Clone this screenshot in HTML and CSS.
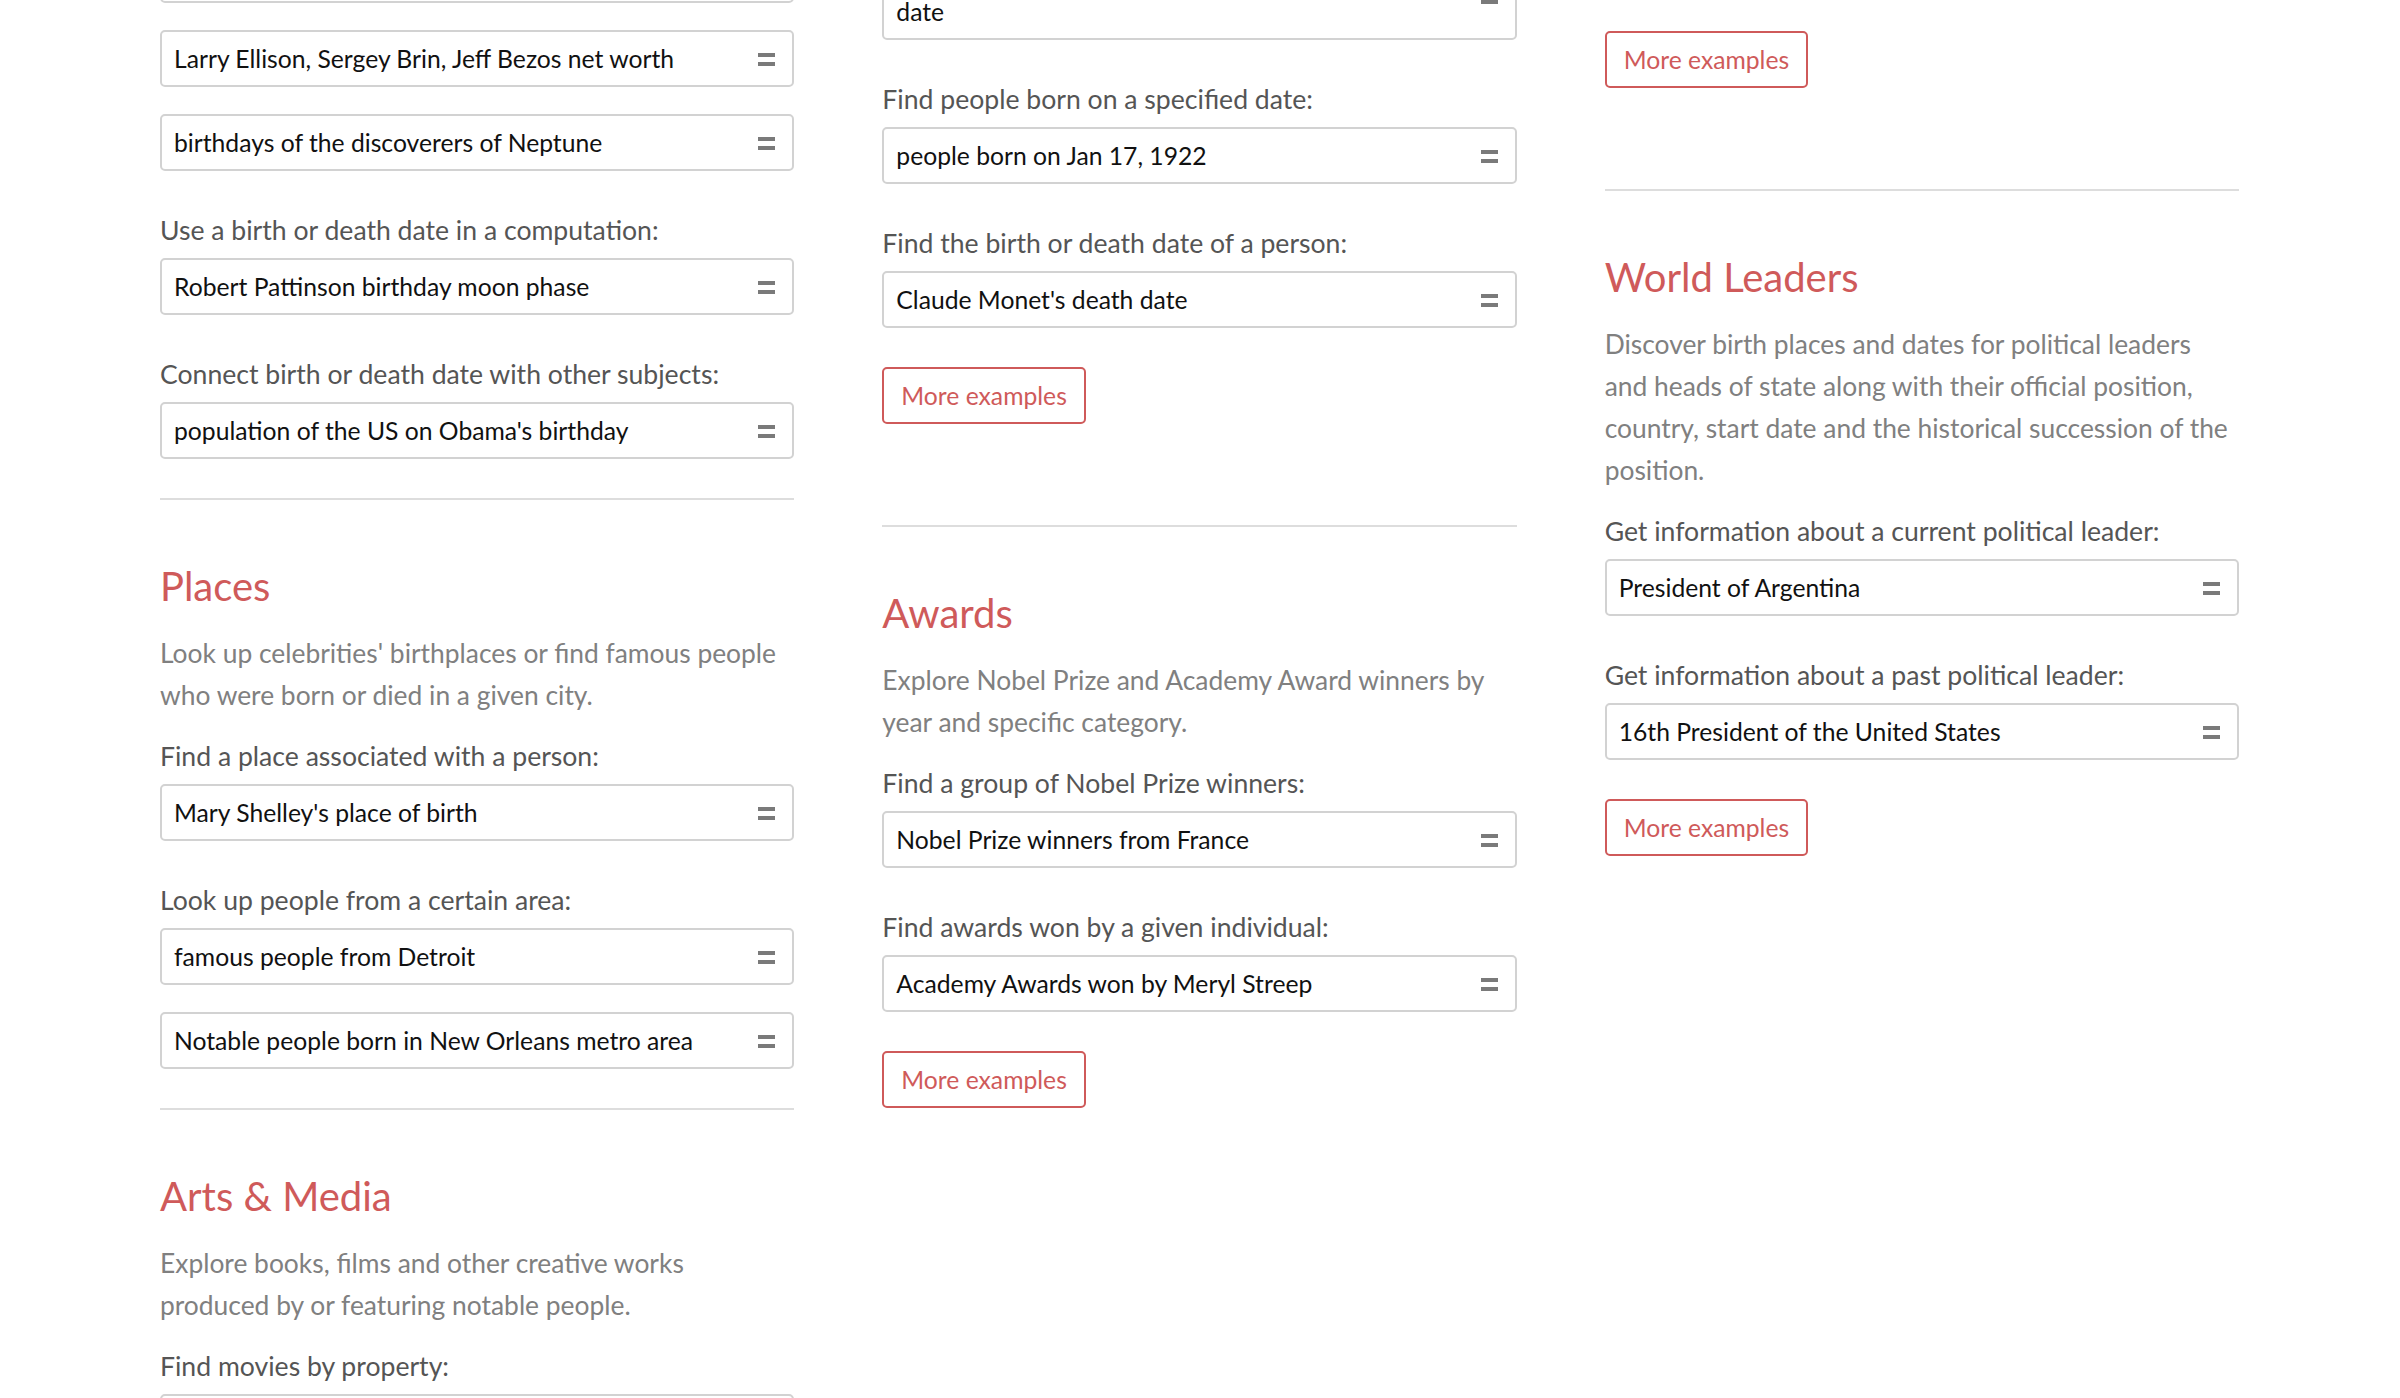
FILE: index.html
```html
<!DOCTYPE html>
<html lang="en">
<head>
<meta charset="utf-8">
<title>People examples</title>
<link rel="stylesheet" href="styles.css">
</head>
<body>
<svg width="0" height="0" class="defs" aria-hidden="true">
  <symbol id="eq" viewBox="0 0 17 13"><rect x="0" y="0" width="17" height="4"/><rect x="0" y="9" width="17" height="4"/></symbol>
</svg>
<main class="columns">
  <div class="col">
    <section class="section lead-1">
      <div class="group">
        <div class="box"><span class="q">Bill Gates birthday</span><svg class="eq"><use href="#eq"/></svg></div>
        <div class="box"><span class="q">Larry Ellison, Sergey Brin, Jeff Bezos net worth</span><svg class="eq"><use href="#eq"/></svg></div>
        <div class="box"><span class="q">birthdays of the discoverers of Neptune</span><svg class="eq"><use href="#eq"/></svg></div>
      </div>
      <div class="group">
        <div class="label">Use a birth or death date in a computation:</div>
        <div class="box"><span class="q">Robert Pattinson birthday moon phase</span><svg class="eq"><use href="#eq"/></svg></div>
      </div>
      <div class="group">
        <div class="label">Connect birth or death date with other subjects:</div>
        <div class="box"><span class="q">population of the US on Obama's birthday</span><svg class="eq"><use href="#eq"/></svg></div>
      </div>
    </section>
    <div class="rule"></div>
    <section class="section">
      <h2 class="heading">Places</h2>
      <p class="desc">Look up celebrities' birthplaces or find famous people who were born or died in a given city.</p>
      <div class="group">
        <div class="label">Find a place associated with a person:</div>
        <div class="box"><span class="q">Mary Shelley's place of birth</span><svg class="eq"><use href="#eq"/></svg></div>
      </div>
      <div class="group">
        <div class="label">Look up people from a certain area:</div>
        <div class="box"><span class="q">famous people from Detroit</span><svg class="eq"><use href="#eq"/></svg></div>
        <div class="box"><span class="q">Notable people born in New Orleans metro area</span><svg class="eq"><use href="#eq"/></svg></div>
      </div>
    </section>
    <div class="rule"></div>
    <section class="section">
      <h2 class="heading">Arts &amp; Media</h2>
      <p class="desc">Explore books, films and other creative works produced by or featuring notable people.</p>
      <div class="group">
        <div class="label">Find movies by property:</div>
        <div class="box"><span class="q">movies directed by Steven Spielberg</span><svg class="eq"><use href="#eq"/></svg></div>
      </div>
    </section>
  </div>

  <div class="col">
    <section class="section lead-2">
      <div class="group">
        <div class="box"><span class="q">people born on Marilyn Monroe's death<br>date</span><svg class="eq"><use href="#eq"/></svg></div>
      </div>
      <div class="group">
        <div class="label">Find people born on a specified date:</div>
        <div class="box"><span class="q">people born on Jan 17, 1922</span><svg class="eq"><use href="#eq"/></svg></div>
      </div>
      <div class="group">
        <div class="label">Find the birth or death date of a person:</div>
        <div class="box"><span class="q">Claude Monet's death date</span><svg class="eq"><use href="#eq"/></svg></div>
      </div>
      <a class="btn" href="#">More examples</a>
    </section>
    <div class="rule"></div>
    <section class="section">
      <h2 class="heading">Awards</h2>
      <p class="desc">Explore Nobel Prize and Academy Award winners by year and specific category.</p>
      <div class="group">
        <div class="label">Find a group of Nobel Prize winners:</div>
        <div class="box"><span class="q">Nobel Prize winners from France</span><svg class="eq"><use href="#eq"/></svg></div>
      </div>
      <div class="group">
        <div class="label">Find awards won by a given individual:</div>
        <div class="box"><span class="q">Academy Awards won by Meryl Streep</span><svg class="eq"><use href="#eq"/></svg></div>
      </div>
      <a class="btn" href="#">More examples</a>
    </section>
  </div>

  <div class="col">
    <section class="section lead-3">
      <div class="group">
        <div class="box"><span class="q">notable people who died in 1990</span><svg class="eq"><use href="#eq"/></svg></div>
      </div>
      <a class="btn" href="#">More examples</a>
    </section>
    <div class="rule"></div>
    <section class="section">
      <h2 class="heading">World Leaders</h2>
      <p class="desc">Discover birth places and dates for political leaders and heads of state along with their official position, country, start date and the historical succession of the position.</p>
      <div class="group">
        <div class="label">Get information about a current political leader:</div>
        <div class="box"><span class="q">President of Argentina</span><svg class="eq"><use href="#eq"/></svg></div>
      </div>
      <div class="group">
        <div class="label">Get information about a past political leader:</div>
        <div class="box"><span class="q">16th President of the United States</span><svg class="eq"><use href="#eq"/></svg></div>
      </div>
      <a class="btn" href="#">More examples</a>
    </section>
  </div>
</main>
</body>
</html>
```

FILE: styles.css
```css
html, body {
  margin: 0;
  padding: 0;
  background: #ffffff;
}
body {
  width: 2400px;
  height: 1398px;
  overflow: hidden;
  font-family: "Lato", "Open Sans", sans-serif;
  color: #1a1a1a;
}
.defs {
  position: absolute;
  width: 0;
  height: 0;
}
.columns {
  display: grid;
  grid-template-columns: repeat(3, 1fr);
  column-gap: 88px;
  padding: 0 161px 0 160px;
  align-items: start;
}
.col {
  display: flex;
  flex-direction: column;
  min-width: 0;
}
.section {
  display: flex;
  flex-direction: column;
  padding: 62px 0 12px;
}
.lead-1 { margin-top: -54px; padding-top: 0; }
.lead-2 { margin-top: -47px; padding-top: 0; }
.lead-3 { margin-top: -65px; padding-top: 0; }
.rule {
  height: 2px;
  background: #dddddd;
}
.heading {
  margin: 0 0 22px;
  font-size: 40px;
  line-height: 48px;
  font-weight: 400;
  color: #cf5a5a;
}
.desc {
  margin: 0 0 22px;
  font-size: 26.4px;
  line-height: 42px;
  color: #808080;
}
.group {
  display: flex;
  flex-direction: column;
}
.group + .group {
  margin-top: 14px;
}
.label {
  margin-bottom: 10px;
  font-size: 26.6px;
  line-height: 36px;
  color: #555555;
}
.box {
  display: flex;
  align-items: center;
  gap: 16px;
  margin-bottom: 27px;
  padding: 12px 17px 11px 12px;
  border: 2px solid #d2d2d2;
  border-radius: 5px;
  font-size: 24.7px;
  line-height: 30px;
  color: #111111;
}
.q {
  flex: 1;
  min-width: 0;
}
.eq {
  flex: none;
  width: 17px;
  height: 13px;
  fill: #7a7a7a;
}
.btn {
  align-self: flex-start;
  margin: 12px 0 89px;
  padding: 12px 17px 11px;
  border: 2px solid #cf5a5a;
  border-radius: 5px;
  font-size: 24.7px;
  line-height: 30px;
  color: #cf5a5a;
  text-decoration: none;
}
```
